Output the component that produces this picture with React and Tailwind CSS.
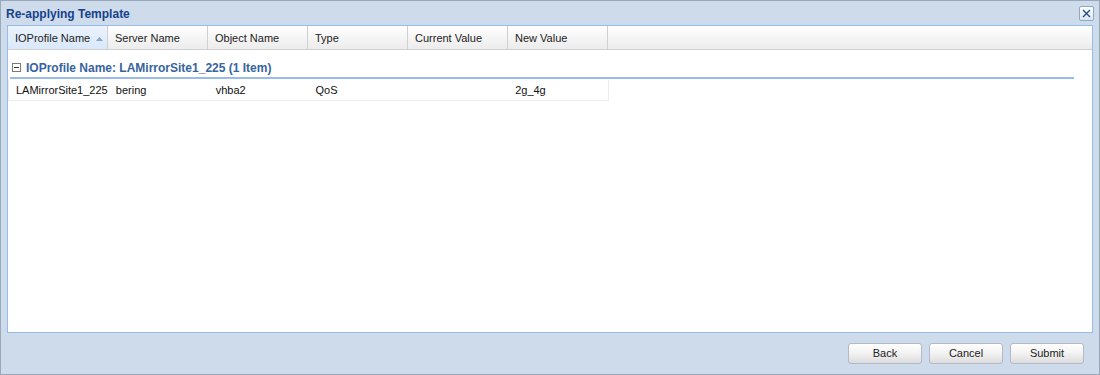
import React from 'react'

const COLUMNS = ['IOProfile Name', 'Server Name', 'Object Name', 'Type', 'Current Value', 'New Value']
const ROW = ['LAMirrorSite1_225', 'bering', 'vhba2', 'QoS', '', '2g_4g']

function CloseTool() {
  return (
    <span className="flex h-[15px] w-[15px] items-center justify-center rounded-[2px] border border-[#8fa7c6] bg-gradient-to-b from-white to-[#dbe6f4]">
      <svg width="9" height="9" viewBox="0 0 9 9">
        <path d="M1 1 L8 8 M8 1 L1 8" stroke="#2a4c86" strokeWidth="1.4" />
      </svg>
    </span>
  )
}

function Button({ children }) {
  return (
    <button
      type="button"
      className="h-[21px] w-[74px] rounded-[3px] border border-[#b5b8c8] bg-gradient-to-b from-white via-[#f2f2f2] to-[#dcdcdc] text-[11px] text-[#222] shadow-[inset_0_1px_0_#fff]"
    >
      {children}
    </button>
  )
}

export default function App() {
  return (
    <div
      className="flex h-[375px] w-[1100px] flex-col border border-[#99a8bb] bg-[#cedbea] text-[11px]"
      style={{ fontFamily: '"Liberation Sans", Arial, sans-serif' }}
    >
      <div className="flex h-[24px] items-center justify-between pl-[5px] pr-[5px] pt-[1px]">
        <span className="text-[12px] font-bold text-[#15428b]">Re-applying Template</span>
        <CloseTool />
      </div>

      <div className="mx-[6px] flex flex-1 flex-col border border-[#99bbe8] bg-white">
        <div className="flex h-[24px] border-b border-[#d0d0d0] bg-gradient-to-b from-white to-[#ececec]">
          {COLUMNS.map((c, i) => (
            <div
              key={c}
              className={`flex w-[100px] items-center gap-[6px] border-r border-[#d0d0d0] pl-[7px] pt-[2px] text-[#222] ${i === 0 ? 'bg-gradient-to-b from-[#ebf3fd] to-[#d9e8fb]' : ''}`}
            >
              {c}
              {i === 0 && (
                <svg width="7" height="4" viewBox="0 0 7 4">
                  <path d="M0 4 L3.5 0 L7 4 Z" fill="#8aa6c9" />
                </svg>
              )}
            </div>
          ))}
          <div className="flex-1" />
        </div>

        <div className="ml-[2px] mr-[18px] flex h-[29px] items-center gap-[5px] border-b-2 border-[#99bbe8] pl-[2px] pt-[8px]">
          <svg width="9" height="9" viewBox="0 0 9 9">
            <rect x="0.5" y="0.5" width="8" height="8" fill="white" stroke="#7a7a7a" />
            <path d="M2 4.5 H7" stroke="#333" strokeWidth="1" />
          </svg>
          <span className="text-[12px] font-bold text-[#3764a0]">IOProfile Name: LAMirrorSite1_225 (1 Item)</span>
        </div>

        <div className="mt-[1px] flex h-[21px] w-[601px] items-center border border-t-0 border-[#ededed] pt-[1px]">
          {ROW.map((v, i) => (
            <div key={i} className="w-[100px] pl-[7px] text-[#111]">
              {v}
            </div>
          ))}
        </div>
      </div>

      <div className="flex h-[41px] items-center justify-end gap-[7px] pr-[15px]">
        <Button>Back</Button>
        <Button>Cancel</Button>
        <Button>Submit</Button>
      </div>
    </div>
  )
}
